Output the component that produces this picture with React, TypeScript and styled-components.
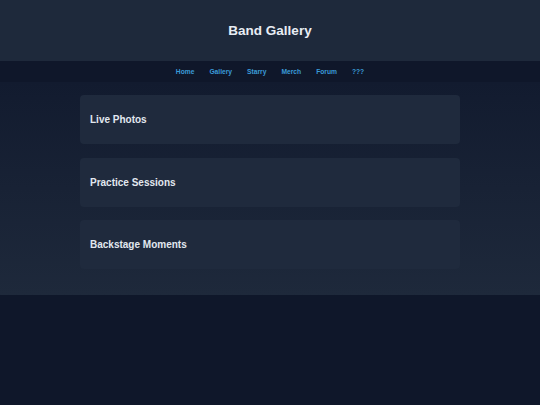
import { createGlobalStyle } from "styled-components";
import styled from "styled-components";

const GlobalStyle = createGlobalStyle`
  html, body {
    margin: 0;
    padding: 0;
    background: #0f172a;
    font-family: "Liberation Sans", Arial, sans-serif;
  }
  * {
    box-sizing: border-box;
  }
`;

const albums = ["Live Photos", "Practice Sessions", "Backstage Moments"];
const links = ["Home", "Gallery", "Starry", "Merch", "Forum", "???"];

export default function App() {
  return (
    <>
      <GlobalStyle />
      <Header>
        <Title>Band Gallery</Title>
      </Header>
      <Nav>
        {links.map((l) => (
          <NavLink key={l} href="#">
            {l}
          </NavLink>
        ))}
      </Nav>
      <Main>
        {albums.map((a) => (
          <Card key={a}>
            <CardTitle>{a}</CardTitle>
          </Card>
        ))}
      </Main>
    </>
  );
}

const Header = styled.header`
  height: 61px;
  background: #1e293b;
  display: flex;
  align-items: center;
  justify-content: center;
`;

const Title = styled.h1`
  margin: 0;
  font-size: 13.5px;
  font-weight: 700;
  color: #e8edf4;
`;

const Nav = styled.nav`
  height: 21px;
  background: #0f172a;
  display: flex;
  align-items: center;
  justify-content: center;
  gap: 15px;
`;

const NavLink = styled.a`
  font-size: 6.7px;
  font-weight: 700;
  color: #3b9bd8;
  text-decoration: none;
`;

const Main = styled.main`
  background: linear-gradient(to bottom, #121b2f, #1e293b);
  padding: 13px 80px 26px;
  display: flex;
  flex-direction: column;
  gap: 13.5px;
`;

const Card = styled.section`
  height: 49px;
  background: #1f2a3d;
  border-radius: 4px;
  padding: 0 10px;
  display: flex;
  align-items: center;
`;

const CardTitle = styled.h2`
  margin: 0;
  font-size: 10px;
  font-weight: 700;
  color: #e2e8f0;
`;
